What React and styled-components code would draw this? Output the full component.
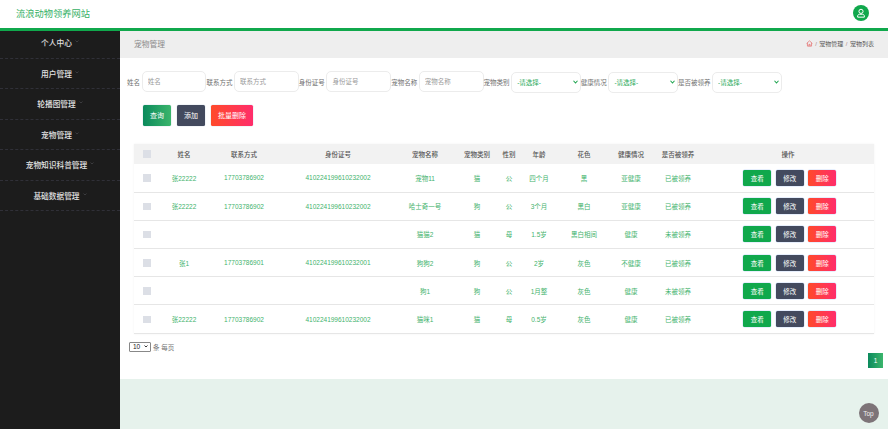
import React from "react";
import styled, { createGlobalStyle } from "styled-components";

const Global = createGlobalStyle`
  html, body { margin: 0; padding: 0; height: 100%; overflow: hidden; background: #fff; }
  body { font-family: "Liberation Sans", "Noto Sans CJK SC", sans-serif; }
  * { box-sizing: border-box; }
`;

const Page = styled.div`
  width: 888px; height: 429px; display: flex; flex-direction: column; overflow: hidden;
`;
const Header = styled.header`
  position: relative; z-index: 1;
  height: 31px; flex: none; display: flex; align-items: center; justify-content: space-between;
  padding: 0 19px 2px 16px; background: #fff; border-bottom: 3px solid #10a84c;
`;
const Logo = styled.div`
  font-size: 9.25px; color: #35b065; margin-top: -1px;
`;
const Avatar = styled.div`
  width: 16px; height: 16px; border-radius: 50%; background: #10a84c;
  display: flex; align-items: center; justify-content: center;
`;
const Body = styled.div`
  flex: 1; display: flex; min-height: 0;
`;
const Sidebar = styled.nav`
  width: 120px; flex: none; background: #1c1c1c; margin-top: -3px;
`;
const NavItem = styled.div`
  height: 30.5px; display: flex; align-items: center; justify-content: center; gap: 3px;
  padding-right: 7px; border-bottom: 1px dashed #303038;
  font-size: 7.7px; font-weight: 500; color: #e2e2e2;
`;
const Caret = styled.svg`
  width: 4px; height: 3px; flex: none; margin-right: -7px; margin-top: -2px;
`;
const Main = styled.main`
  flex: 1; min-width: 0; display: flex; flex-direction: column; background: #e6f2ec;
`;
const Crumbs = styled.div`
  height: 27px; flex: none; background: #eee; display: flex; align-items: center;
  justify-content: space-between; padding: 0 14px 1.5px;
`;
const CrumbTitle = styled.div`
  font-size: 7.75px; color: #8a8a8a;
`;
const CrumbPath = styled.div`
  display: flex; align-items: center; gap: 2px; font-size: 6px; color: #555;
`;
const CrumbSep = styled.span`
  color: #a88; margin: 0 0.5px;
`;
const Content = styled.section`
  height: 321px; flex: none; background: #fff; padding: 13px 14px 0 7px;
`;
const SearchRow = styled.form`
  display: flex; align-items: center; height: 21px; margin: 0;
`;
const Label = styled.label`
  font-size: 6.5px; color: #707070; margin-right: 1.7px; white-space: nowrap;
`;
const TextField = styled.input`
  width: 64.7px; height: 21px; padding: 0 5px; border: 1px solid #ececec; border-radius: 5px;
  font: 6.5px "Liberation Sans", "Noto Sans CJK SC", sans-serif; color: #555; background: #fff; outline: none;
  &::placeholder { color: #9a9a9a; }
`;
const SelectWrap = styled.div`
  position: relative; width: 69.5px; height: 21px;
`;
const FieldSelect = styled.select`
  appearance: none; width: 100%; height: 100%; padding: 0 5px; background: #fff;
  border: 1px solid #ececec; border-radius: 5px; outline: none;
  font: 6.5px "Liberation Sans", "Noto Sans CJK SC", sans-serif; color: #2aaa5a;
`;
const Chevron = styled.svg`
  position: absolute; right: 2.5px; top: 8.5px; width: 5px; height: 4px; pointer-events: none;
`;
const ActionRow = styled.div`
  display: flex; gap: 6px; margin: 13px 0 18px 16px;
`;
const Button = styled.button`
  height: ${p => p.$small ? "16px" : "20.5px"};
  width: ${p => p.$w}px; padding: 0; border: none; border-radius: 1.5px; color: #fff; cursor: pointer;
  font: ${p => p.$small ? "6.5px" : "7px"} "Liberation Sans", "Noto Sans CJK SC", sans-serif;
  box-shadow: 0 0 0 0.5px ${p => p.$small ? "#cfe0fb" : "#e6ebf2"};
  background: ${p => ({
    query: "linear-gradient(90deg,#0b8a5c,#3bb56c)",
    view: "#10a84c",
    dark: "#434a5e",
    danger: "linear-gradient(90deg,#ff4a2a,#ff2d6b)",
  })[p.$kind]};
`;
const Table = styled.table`
  width: 740px; margin-left: 7px; border-collapse: collapse; table-layout: fixed;
  box-shadow: 0 0 2px rgba(0,0,0,0.06);
`;
const HeadCell = styled.th`
  height: 20.5px; padding: 0; background: #f2f2f2; font-size: 6.5px; font-weight: 500; color: #555; text-align: center;
`;
const Row = styled.tr`
  border-bottom: 1px solid #e6e6e6;
`;
const Cell = styled.td`
  height: 28.2px; padding: 0; font-size: 6.5px; color: #3fb36d; text-align: center; white-space: nowrap;
`;
const Check = styled.span`
  display: inline-block; width: 7.5px; height: 7.5px; background: #dcdfe6; vertical-align: middle;
`;
const OpGroup = styled.div`
  display: flex; justify-content: center; gap: 4.5px; padding-left: 3.5px;
`;
const PageSizeRow = styled.div`
  display: flex; align-items: center; gap: 2px; margin: 8.5px 0 0 2px; font-size: 6.5px; color: #777;
`;
const PageSizeWrap = styled.div`
  position: relative; width: 22px; height: 9.5px;
`;
const PageSize = styled.select`
  appearance: none; display: block; width: 100%; height: 100%; padding: 0 0 0 3px;
  font: 6.5px/8px "Liberation Sans", sans-serif; color: #222;
  border: 0.5px solid #888; border-radius: 1px; background: #fff;
`;
const PageSizeArrow = styled.svg`
  position: absolute; right: 3px; top: 3px; width: 4px; height: 3px; pointer-events: none;
`;
const Pager = styled.div`
  display: flex; justify-content: flex-end; margin: 1px -9px 0 0;
`;
const PageNum = styled.div`
  width: 15px; height: 15px; display: flex; align-items: center; justify-content: center;
  font-size: 6.5px; color: #fff; background: linear-gradient(90deg,#0b8a5c,#3bb56c);
`;
const TopButton = styled.div`
  position: fixed; left: 858.5px; top: 403px; width: 20px; height: 20px; border-radius: 50%;
  background: #7d7478; color: #f1f1f1; font-size: 6.5px;
  display: flex; align-items: center; justify-content: center;
`;

const nav = ["个人中心", "用户管理", "轮播图管理", "宠物管理", "宠物知识科普管理", "基础数据管理"];
const cols = [26, 48, 72, 116, 58, 46, 18, 42, 48, 46, 48, 172];
const heads = ["", "姓名", "联系方式", "身份证号", "宠物名称", "宠物类别", "性别", "年龄", "花色", "健康情况", "是否被领养", "操作"];
const A = ["张22222", "17703786902", "410224199610232002"];
const rows = [
  [...A, "宠物11", "猫", "公", "四个月", "黑", "亚健康", "已被领养"],
  [...A, "哈士奇一号", "狗", "公", "3个月", "黑白", "亚健康", "已被领养"],
  ["", "", "", "猫猫2", "猫", "母", "1.5岁", "黑白相间", "健康", "未被领养"],
  ["张1", "17703786901", "410224199610232001", "狗狗2", "狗", "公", "2岁", "灰色", "不健康", "已被领养"],
  ["", "", "", "狗1", "狗", "公", "1月整", "灰色", "健康", "未被领养"],
  [...A, "猫咪1", "猫", "母", "0.5岁", "灰色", "健康", "已被领养"],
];

const Field = ({ label, placeholder }) => (
  <>
    <Label>{label}</Label>
    <TextField placeholder={placeholder} />
  </>
);
const Choice = ({ label }) => (
  <>
    <Label>{label}</Label>
    <SelectWrap>
      <FieldSelect defaultValue="">
        <option value="">-请选择-</option>
      </FieldSelect>
      <Chevron viewBox="0 0 10 8" fill="none" stroke="#22a652" strokeWidth="2.2">
        <path d="M1 1.5 5 6l4-4.500" />
      </Chevron>
    </SelectWrap>
  </>
);

export default function App() {
  return (
    <Page>
      <Global />
      <Header>
        <Logo>流浪动物领养网站</Logo>
        <Avatar>
          <svg width="10" height="10" viewBox="0 0 24 24" fill="none" stroke="#fff" strokeWidth="2.4">
            <circle cx="12" cy="8" r="5" />
            <path d="M4 22v-3c0-2 2-4 4.500-4h7c2.500 0 4.500 2 4.500 4v3z" />
          </svg>
        </Avatar>
      </Header>
      <Body>
        <Sidebar>
          {nav.map(n => (
            <NavItem key={n}>
              {n}
              <Caret viewBox="0 0 8 6" fill="none" stroke="#45454a" strokeWidth="1.5">
                <path d="M1 1l3 3 3-3" />
              </Caret>
            </NavItem>
          ))}
        </Sidebar>
        <Main>
          <Crumbs>
            <CrumbTitle>宠物管理</CrumbTitle>
            <CrumbPath>
              <svg width="7" height="7" viewBox="0 0 24 24" fill="none" stroke="#e57373" strokeWidth="2.6">
                <path d="M2 12 12 3l10 9M5 10v11h14V10M10 21v-6h4v6" />
              </svg>
              <CrumbSep>/</CrumbSep>
              <span>宠物管理</span>
              <CrumbSep>/</CrumbSep>
              <span>宠物列表</span>
            </CrumbPath>
          </Crumbs>
          <Content>
            <SearchRow>
              <Field label="姓名" placeholder="姓名" />
              <Field label="联系方式" placeholder="联系方式" />
              <Field label="身份证号" placeholder="身份证号" />
              <Field label="宠物名称" placeholder="宠物名称" />
              <Choice label="宠物类别" />
              <Choice label="健康情况" />
              <Choice label="是否被领养" />
            </SearchRow>
            <ActionRow>
              <Button type="button" $kind="query" $w={28}>查询</Button>
              <Button type="button" $kind="dark" $w={28}>添加</Button>
              <Button type="button" $kind="danger" $w={42}>批量删除</Button>
            </ActionRow>
            <Table>
              <colgroup>
                {cols.map((w, i) => <col key={i} width={w} />)}
              </colgroup>
              <thead>
                <tr>
                  {heads.map((h, i) => <HeadCell key={i}>{i === 0 ? <Check /> : h}</HeadCell>)}
                </tr>
              </thead>
              <tbody>
                {rows.map((r, i) => (
                  <Row key={i}>
                    <Cell><Check /></Cell>
                    {r.map((c, j) => <Cell key={j}>{c}</Cell>)}
                    <Cell>
                      <OpGroup>
                        <Button type="button" $small $kind="view" $w={28}>查看</Button>
                        <Button type="button" $small $kind="dark" $w={28}>修改</Button>
                        <Button type="button" $small $kind="danger" $w={28}>删除</Button>
                      </OpGroup>
                    </Cell>
                  </Row>
                ))}
              </tbody>
            </Table>
            <PageSizeRow>
              <PageSizeWrap>
                <PageSize defaultValue="10"><option>10</option></PageSize>
                <PageSizeArrow viewBox="0 0 8 6" fill="none" stroke="#222" strokeWidth="1.8">
                  <path d="M1 1l3 3 3-3" />
                </PageSizeArrow>
              </PageSizeWrap>
              <span>条 每页</span>
            </PageSizeRow>
            <Pager><PageNum>1</PageNum></Pager>
          </Content>
        </Main>
      </Body>
      <TopButton>Top</TopButton>
    </Page>
  );
}
